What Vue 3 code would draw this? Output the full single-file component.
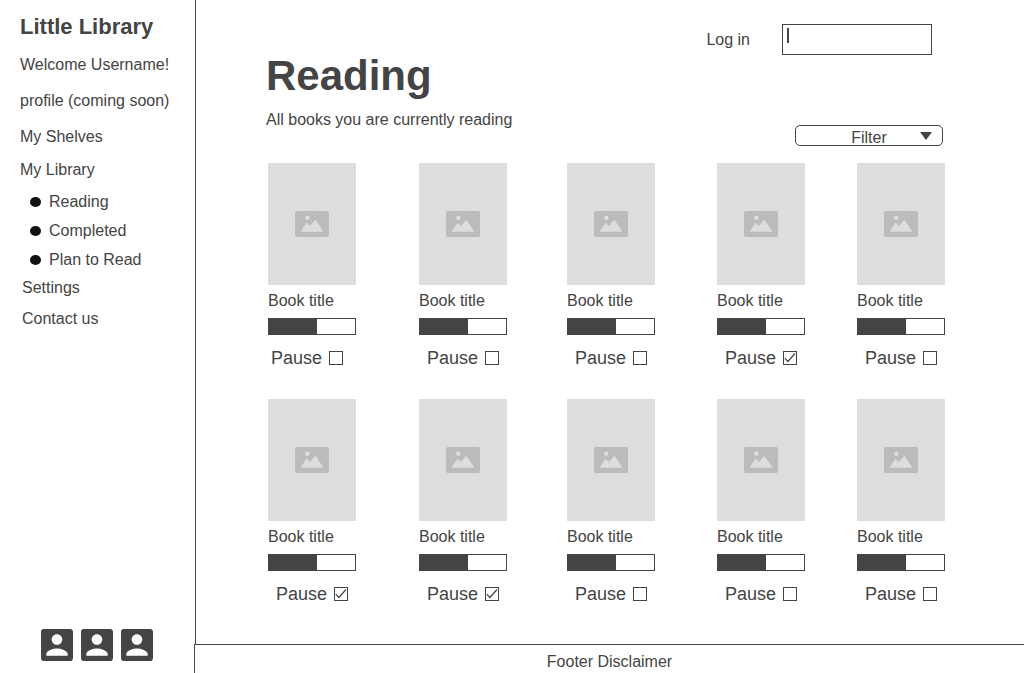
<script setup>
import { ref } from 'vue'

const shelves = ['Reading', 'Completed', 'Plan to Read']
const login = ref('')
const books = ref(
  Array.from({ length: 10 }, (_, i) => ({
    id: i + 1,
    title: 'Book title',
    progress: 56,
    paused: [3, 5, 6].includes(i),
  }))
)
</script>

<template>
  <div class="shell">
    <aside class="sidebar">
      <h2 class="brand">Little Library</h2>
      <nav class="menu">
        <div class="group account">
          <span>Welcome Username!</span>
          <a href="#profile">profile (coming soon)</a>
          <a href="#shelves">My Shelves</a>
        </div>
        <a class="library" href="#library">My Library</a>
        <ul class="shelves">
          <li v-for="shelf in shelves" :key="shelf">
            <span class="dot"></span><a href="#shelf">{{ shelf }}</a>
          </li>
        </ul>
        <div class="group extra">
          <a href="#settings">Settings</a>
          <a href="#contact">Contact us</a>
        </div>
      </nav>
      <div class="people">
        <a v-for="n in 3" :key="n" href="#contact" :aria-label="'Contact ' + n">
          <svg viewBox="3 3 18 18" width="32" height="32">
            <path d="M3 4.6v14.8c0 .9.7 1.6 1.6 1.6h14.8c.9 0 1.6-.7 1.6-1.6V4.6c0-.9-.7-1.6-1.6-1.6H4.6C3.7 3 3 3.7 3 4.6zM15 8.9c0 1.66-1.34 3-3 3s-3-1.34-3-3 1.34-3 3-3 3 1.34 3 3zM6 17c0-2 4-3.1 6-3.1s6 1.1 6 3.1v1H6v-1z" fill="#444" fill-rule="evenodd" />
          </svg>
        </a>
      </div>
    </aside>

    <div class="page">
      <main class="content">
        <header class="top">
          <div class="heading">
            <h1>Reading</h1>
            <p>All books you are currently reading</p>
          </div>
          <div class="controls">
            <div class="login">
              <label for="login">Log in</label>
              <span class="field">
                <input id="login" v-model="login" type="text" />
                <span class="caret"></span>
              </span>
            </div>
            <div class="filter">
              <select aria-label="Filter">
                <option>Filter</option>
              </select>
              <svg class="arrow" viewBox="0 0 12 8" width="12" height="8"><path d="M0 0h12L6 8z" fill="#444" /></svg>
            </div>
          </div>
        </header>

        <section class="books">
          <article v-for="book in books" :key="book.id" class="book">
            <div class="cover">
              <svg viewBox="0 0 34 26" width="34" height="26">
                <rect width="34" height="26" rx="2" fill="#bbb" />
                <circle cx="12.3" cy="6.7" r="2.2" fill="#ddd" />
                <path d="M6.3 20.2 11.7 12.2 15 15.6 20.3 9.3 27.7 20.2z" fill="#ddd" stroke="#ddd" stroke-linejoin="round" />
              </svg>
            </div>
            <h3>{{ book.title }}</h3>
            <div class="bar" role="progressbar" :aria-valuenow="book.progress">
              <div class="fill" :style="{ width: book.progress + '%' }"></div>
            </div>
            <label class="pause">
              Pause
              <span class="box">
                <input v-model="book.paused" type="checkbox" />
                <svg v-if="book.paused" viewBox="0 0 14 14" width="14" height="14">
                  <path d="M1.8 7.2 4.9 10.5 12 2.5" fill="none" stroke="#444" stroke-width="1.2" />
                </svg>
              </span>
            </label>
          </article>
        </section>
      </main>
      <footer class="footer">Footer Disclaimer</footer>
    </div>
  </div>
</template>

<style>
body {
  margin: 0;
  background: #fff;
}
</style>

<style scoped>
.shell {
  display: flex;
  min-height: 100vh;
  color: #444;
  font: 16px/20px "Liberation Sans", Arial, sans-serif;
}
h1, h2, h3, p, ul {
  margin: 0;
  padding: 0;
}
a {
  color: inherit;
  text-decoration: none;
}
svg {
  display: block;
}
.sidebar {
  display: flex;
  flex: 0 0 195px;
  flex-direction: column;
  box-sizing: border-box;
  padding: 14px 0 12px 20px;
  white-space: nowrap;
}
.brand {
  margin-bottom: 15px;
  font-size: 22px;
  line-height: 26px;
}
.menu,
.group {
  display: flex;
  flex-direction: column;
}
.account {
  gap: 16px;
}
.library {
  margin-top: 13px;
}
.shelves {
  display: flex;
  flex-direction: column;
  gap: 9px;
  margin: 12px 0 8px;
  padding-left: 10px;
  list-style: none;
}
.shelves li {
  display: flex;
  align-items: center;
  gap: 8px;
}
.dot {
  width: 11px;
  height: 10px;
  border-radius: 50%;
  background: #111;
}
.extra {
  gap: 11px;
  padding-left: 2px;
}
.people {
  display: flex;
  gap: 8px;
  margin-top: auto;
  padding-left: 21px;
}
.page {
  display: flex;
  flex: 1;
  flex-direction: column;
  min-width: 0;
}
.content {
  flex: 1;
  border-left: 1px solid #444;
  padding: 24px 79px 36px 72px;
}
.top {
  display: flex;
  justify-content: space-between;
  margin: 0 2px 17px -2px;
}
.heading {
  padding: 28px 0 16px;
}
h1 {
  margin-bottom: 10px;
  font-size: 42px;
  line-height: 48px;
}
.controls {
  display: flex;
  flex-direction: column;
  justify-content: space-between;
  align-items: flex-end;
}
.login {
  display: flex;
  align-items: center;
  gap: 32px;
  margin-right: 11px;
}
.field {
  position: relative;
}
.field input {
  display: block;
  box-sizing: border-box;
  width: 150px;
  height: 31px;
  border: 1px solid #444;
  padding: 2px 6px;
  background: #fff;
  color: inherit;
  font: inherit;
}
.caret {
  position: absolute;
  top: 4px;
  left: 5px;
  width: 2px;
  height: 15px;
  background: #444;
}
.filter {
  position: relative;
}
.filter select {
  display: block;
  appearance: none;
  box-sizing: border-box;
  width: 148px;
  height: 21px;
  border: 1px solid #444;
  border-radius: 5px;
  padding: 2px 0 0;
  background: #fff;
  color: inherit;
  font: inherit;
  text-align: center;
  text-align-last: center;
}
.arrow {
  position: absolute;
  top: 7px;
  right: 11px;
  pointer-events: none;
}
.books {
  display: grid;
  grid-template-columns: 151fr 148fr 150fr 140fr 88px;
  row-gap: 30px;
}
.book {
  width: 88px;
}
.cover {
  display: grid;
  place-items: center;
  height: 122px;
  background: #ddd;
}
h3 {
  margin: 6px 0 7px;
  font-size: 16px;
  font-weight: 400;
}
.bar {
  box-sizing: border-box;
  height: 17px;
  border: 1px solid #444;
}
.fill {
  height: 100%;
  background: #444;
}
.pause {
  display: flex;
  align-items: center;
  gap: 7px;
  margin: 12px 0 0 8px;
  font-size: 18px;
  line-height: 22px;
}
.book:first-child .pause {
  margin-left: 3px;
}
.box {
  position: relative;
}
.box input {
  display: block;
  appearance: none;
  box-sizing: border-box;
  width: 14px;
  height: 14px;
  margin: 0;
  border: 1px solid #444;
  background: #fff;
}
.box svg {
  position: absolute;
  top: 0;
  left: 0;
  pointer-events: none;
}
.footer {
  margin-left: -1px;
  border-top: 1px solid #444;
  border-left: 1px solid #444;
  padding: 7px 0 1px;
  text-align: center;
}
</style>
